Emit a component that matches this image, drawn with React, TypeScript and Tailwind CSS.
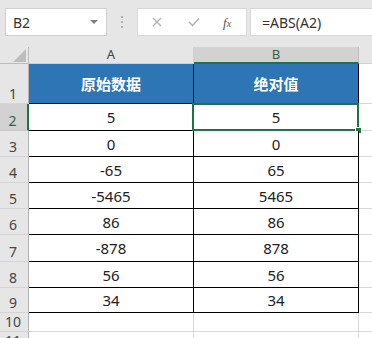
import React from 'react';

const font = { fontFamily: '"Noto Sans", "Noto Sans CJK SC", sans-serif' };

// row heights after the column header row
const rows = [
  { n: 1, h: 'h-[40px]', a: '原始数据', b: '绝对值', head: true },
  { n: 2, h: 'h-[27px]', a: '5', b: '5' },
  { n: 3, h: 'h-[26px]', a: '0', b: '0' },
  { n: 4, h: 'h-[26px]', a: '-65', b: '65' },
  { n: 5, h: 'h-[26px]', a: '-5465', b: '5465' },
  { n: 6, h: 'h-[26px]', a: '86', b: '86' },
  { n: 7, h: 'h-[27px]', a: '-878', b: '878' },
  { n: 8, h: 'h-[26px]', a: '56', b: '56' },
  { n: 9, h: 'h-[25px]', a: '34', b: '34' },
  { n: 10, h: 'h-[19px]', a: '', b: '' },
  { n: 11, h: 'h-[19px]', a: '', b: '' },
];

const Toolbar = () => (
  <div className="flex items-start h-[47px] pt-[8px]">
    <div className="ml-[5px] w-[102px] h-[28px] bg-white border border-[#d0d0d0] flex items-center justify-between pl-[7px] pr-[8px]">
      <span className="text-[14px] text-[#333]">B2</span>
      <span className="w-0 h-0 border-l-[4px] border-r-[4px] border-t-[4px] border-l-transparent border-r-transparent border-t-[#808080]" />
    </div>
    <div className="w-[30px] h-[28px] flex flex-col items-center justify-center gap-[3px]">
      <span className="w-[2px] h-[2px] bg-[#b0b0b0]" />
      <span className="w-[2px] h-[2px] bg-[#b0b0b0]" />
      <span className="w-[2px] h-[2px] bg-[#b0b0b0]" />
    </div>
    <div className="w-[110px] h-[28px] bg-white border border-[#d8d8d8] flex items-center">
      <svg className="ml-[14px]" width="10" height="10" viewBox="0 0 10 10">
        <path d="M1 1 L9 9 M9 1 L1 9" stroke="#b0b0b0" strokeWidth="1.2" />
      </svg>
      <svg className="ml-[26px]" width="12" height="10" viewBox="0 0 12 10">
        <path d="M1 5 L4.5 8.5 L11 1.5" stroke="#b0b0b0" strokeWidth="1.3" fill="none" />
      </svg>
      <span className="ml-[23px] italic text-[#555] text-[13px] leading-none" style={{ fontFamily: '"Liberation Serif", serif' }}>
        f<span className="text-[10px]">x</span>
      </span>
    </div>
    <div className="ml-[3px] flex-1 h-[28px] bg-white border border-[#d8d8d8] border-r-0 flex items-center pl-[11px]">
      <span className="text-[14px] text-[#333]">=ABS(A2)</span>
    </div>
  </div>
);

export default function App() {
  return (
    <div className="w-[372px] h-[338px] overflow-hidden bg-[#e6e6e6]" style={font}>
      <Toolbar />
      <div className="grid grid-cols-[29px_165px_165px_1fr]">
        {/* column headers */}
        <div className="h-[17px] border-r border-b border-[#bcbcbc] flex items-end justify-end pr-[2px] pb-[1px]">
          <svg width="13" height="13" viewBox="0 0 13 13">
            <path d="M13 0 L13 13 L0 13 Z" fill="#bdbdbd" />
          </svg>
        </div>
        <div className="h-[17px] border-r border-b border-[#cfcfcf] flex items-center justify-center text-[13px] text-[#444]">A</div>
        <div className="h-[17px] bg-[#d2d2d2] border-r border-[#bcbcbc] border-b-2 border-b-[#217346] flex items-center justify-center text-[13px] text-[#3d5c48]">B</div>
        <div className="h-[17px] border-b border-[#cfcfcf]" />

        {rows.map((r) => {
          const inTable = r.n <= 9;
          const sel = r.n === 2;
          const cell = r.head
            ? 'bg-[#2e75b6] text-white font-bold text-[15px] border-r border-b border-black'
            : inTable
              ? 'bg-white text-[#222] text-[15px] border-r border-b border-black'
              : 'bg-white border-r border-b border-[#d9d9d9]';
          return (
            <React.Fragment key={r.n}>
              <div
                className={`${r.h} flex items-end justify-center text-[14px] leading-none pb-[2px] pr-[2px] border-b ${
                  sel
                    ? 'bg-[#d2d2d2] text-[#3d5c48] border-b-[#c8c8c8] border-r-2 border-r-[#217346]'
                    : 'text-[#444] border-b-[#d4d4d4] border-r border-r-[#b4b4b4]'
                }`}
              >
                {r.n}
              </div>
              <div className={`${r.h} ${cell} flex items-center justify-center pt-[1px]`}>{r.a}</div>
              <div className={`${r.h} ${cell} relative flex items-center justify-center pt-[1px]`}>
                {r.b}
                {sel && (
                  <>
                    <div className="absolute left-[-2px] top-[-1px] right-[-1px] bottom-[-1px] border-2 border-[#217346]" />
                    <div className="absolute right-[-4px] bottom-[-4px] w-[7px] h-[7px] bg-[#217346] border border-white" />
                  </>
                )}
              </div>
              <div className={`${r.h} bg-white border-b border-[#d9d9d9]`} />
            </React.Fragment>
          );
        })}
      </div>
    </div>
  );
}
